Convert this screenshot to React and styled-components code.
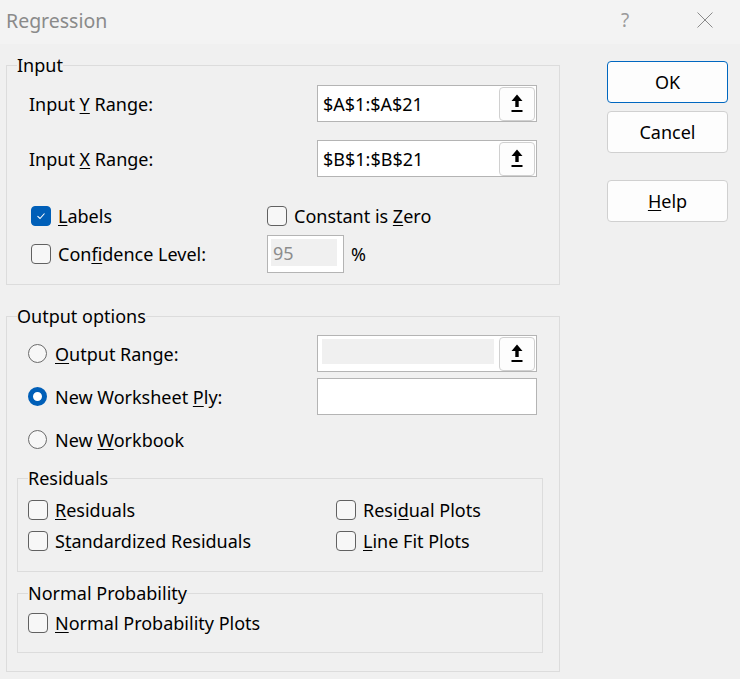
import React from 'react'
import styled, { createGlobalStyle } from 'styled-components'

const GlobalStyle = createGlobalStyle`
  html, body {
    margin: 0;
    padding: 0;
    background: #f0f0f0;
  }
  body {
    font-family: "Noto Sans", "Open Sans", sans-serif;
    font-size: 18px;
    color: #000;
  }
`

const Dialog = styled.div`
  width: 740px;
  height: 679px;
  background: #f0f0f0;
  overflow: hidden;
`

const TitleBar = styled.div`
  height: 44px;
  background: #f3f3f3;
  display: flex;
  align-items: center;
  padding-left: 6px;
  color: #8a8a8a;
  font-size: 19.5px;
`

const Title = styled.div`
  flex: 1;
  padding-bottom: 4px;
`

const TitleButton = styled.div`
  width: ${p => p.$w};
  display: flex;
  justify-content: center;
  padding-bottom: 4px;
  font-size: 19px;
  color: #9a9a9a;
`

const Body = styled.div`
  display: flex;
  padding: 10px 0 0 6px;
`

const LeftColumn = styled.div`
  width: 554px;
  display: flex;
  flex-direction: column;
  gap: 20px;
`

const RightColumn = styled.div`
  margin-left: 47px;
  padding-top: 7px;
  display: flex;
  flex-direction: column;
  gap: 8px;
`

const Group = styled.fieldset`
  margin: ${p => p.$m || '0'};
  border: 1px solid #dcdcdc;
  padding: 0;
  min-width: 0;
`

const Legend = styled.legend`
  padding: 0;
  margin-left: 10px;
  font-size: 18px;
  line-height: 22px;
`

const GroupBody = styled.div`
  padding: ${p => p.$pad};
`

const FieldRow = styled.div`
  display: flex;
  align-items: center;
  height: 37px;
  margin-bottom: ${p => p.$gap || '0'};
`

const RowLabel = styled.div`
  width: ${p => p.$w || '288px'};
  box-sizing: border-box;
  padding-left: ${p => p.$indent || '0'};
  flex-shrink: 0;
  display: flex;
  align-items: center;
`

const RangeBox = styled.div`
  width: 220px;
  height: 37px;
  box-sizing: border-box;
  border: 1px solid #b4b4b4;
  background: #fff;
  display: flex;
  align-items: center;
`

const RangeText = styled.div`
  flex: 1;
  padding-left: 5px;
`

const RangeFill = styled.div`
  flex: 1;
  align-self: stretch;
  margin: 3px 5px 7px 4px;
  background: #f0f0f0;
`

const PickButton = styled.div`
  width: 36px;
  height: 34px;
  box-sizing: border-box;
  border: 1px solid #d0d0d0;
  border-radius: 4px;
  background: #fdfdfd;
  display: flex;
  align-items: center;
  justify-content: center;
  margin-right: 1px;
`

const CheckGrid = styled.div`
  display: grid;
  grid-template-columns: ${p => p.$cols};
  row-gap: ${p => p.$rowGap || '11px'};
  align-items: center;
  padding-left: ${p => p.$indent || '0'};
`

const Option = styled.div`
  display: flex;
  align-items: center;
  height: 20px;
  white-space: nowrap;
`

const Box = styled.span`
  width: 20px;
  height: 20px;
  box-sizing: border-box;
  border-radius: 4px;
  border: 1px solid ${p => (p.$checked ? '#005fb8' : '#616161')};
  background: ${p => (p.$checked ? '#005fb8' : '#f7f7f7')};
  display: inline-flex;
  align-items: center;
  justify-content: center;
  margin-right: 7px;
  flex-shrink: 0;
`

const Radio = styled.span`
  width: 19px;
  height: 19px;
  box-sizing: border-box;
  border-radius: 50%;
  border: ${p => (p.$checked ? '5.5px solid #005fb8' : '1px solid #6b6b6b')};
  background: ${p => (p.$checked ? '#fff' : '#f7f7f7')};
  margin-right: 8px;
  flex-shrink: 0;
`

const Percent = styled.div`
  display: flex;
  align-items: center;
`

const SmallBox = styled.div`
  width: 77px;
  height: 38px;
  box-sizing: border-box;
  border: 1px solid #b4b4b4;
  background: #fff;
  padding: 3px 6px 6px 3px;
  margin-right: 7px;
  display: flex;
`

const SmallFill = styled.div`
  flex: 1;
  background: #f0f0f0;
  color: #8c8c8c;
  padding-left: 2px;
  display: flex;
  align-items: center;
`

const Button = styled.div`
  width: 121px;
  height: 42px;
  box-sizing: border-box;
  border: 1px solid ${p => (p.$primary ? '#0067c0' : '#d0d0d0')};
  border-radius: 4px;
  background: #fdfdfd;
  display: flex;
  align-items: center;
  justify-content: center;
  margin-top: ${p => (p.$spaced ? '19px' : '0')};
`

const U = styled.u`
  text-underline-offset: 2px;
`

const Arrow = () => (
  <svg width="12" height="19" viewBox="0 0 12 19">
    <path d="M6 0.5 L11.5 7 L7.7 7 L7.7 13 L4.3 13 L4.3 7 L0.5 7 Z" fill="#000" />
    <rect x="0.5" y="16" width="11" height="2" fill="#000" />
  </svg>
)

const Tick = () => (
  <svg width="12" height="12" viewBox="0 0 12 12">
    <path d="M2.5 6.2 L5 8.5 L9.5 3.5" fill="none" stroke="#fff" strokeWidth="1.1" />
  </svg>
)

const CloseIcon = () => (
  <svg width="16" height="16" viewBox="0 0 16 16">
    <path d="M0.5 0.5 L15.5 15.5 M15.5 0.5 L0.5 15.5" stroke="#8a8a8a" strokeWidth="1" fill="none" />
  </svg>
)

const Check = ({ checked, children }) => (
  <Option>
    <Box $checked={checked}>{checked && <Tick />}</Box>
    <span>{children}</span>
  </Option>
)

const RadioOpt = ({ checked, children }) => (
  <Option>
    <Radio $checked={checked} />
    <span>{children}</span>
  </Option>
)

export default function App() {
  return (
    <Dialog>
      <GlobalStyle />
      <TitleBar>
        <Title>Regression</Title>
        <TitleButton $w="90px">?</TitleButton>
        <TitleButton $w="70px"><CloseIcon /></TitleButton>
      </TitleBar>
      <Body>
        <LeftColumn>
          <Group>
            <Legend>Input</Legend>
            <GroupBody $pad="9px 22px 11px 22px">
              <FieldRow $gap="18px">
                <RowLabel><span>Input <U>Y</U> Range:</span></RowLabel>
                <RangeBox>
                  <RangeText>$A$1:$A$21</RangeText>
                  <PickButton><Arrow /></PickButton>
                </RangeBox>
              </FieldRow>
              <FieldRow $gap="29px">
                <RowLabel><span>Input <U>X</U> Range:</span></RowLabel>
                <RangeBox>
                  <RangeText>$B$1:$B$21</RangeText>
                  <PickButton><Arrow /></PickButton>
                </RangeBox>
              </FieldRow>
              <CheckGrid $cols="236px 1fr" $rowGap="9px" $indent="2px">
                <Check checked><U>L</U>abels</Check>
                <Check>Constant is <U>Z</U>ero</Check>
                <Check>Con<U>f</U>idence Level:</Check>
                <Percent>
                  <SmallBox><SmallFill>95</SmallFill></SmallBox>
                  %
                </Percent>
              </CheckGrid>
            </GroupBody>
          </Group>

          <Group>
            <Legend>Output options</Legend>
            <GroupBody $pad="8px 16px 18px 10px">
              <FieldRow $gap="6px">
                <RowLabel $w="300px" $indent="11px">
                  <RadioOpt><U>O</U>utput Range:</RadioOpt>
                </RowLabel>
                <RangeBox>
                  <RangeFill />
                  <PickButton><Arrow /></PickButton>
                </RangeBox>
              </FieldRow>
              <FieldRow $gap="6px">
                <RowLabel $w="300px" $indent="11px">
                  <RadioOpt checked>New Worksheet <U>P</U>ly:</RadioOpt>
                </RowLabel>
                <RangeBox />
              </FieldRow>
              <FieldRow $gap="9px">
                <RowLabel $w="300px" $indent="11px">
                  <RadioOpt>New <U>W</U>orkbook</RadioOpt>
                </RowLabel>
              </FieldRow>

              <Group>
                <Legend>Residuals</Legend>
                <GroupBody $pad="11px 10px 20px">
                  <CheckGrid $cols="308px 1fr" $rowGap="11px">
                    <Check><U>R</U>esiduals</Check>
                    <Check>Resi<U>d</U>ual Plots</Check>
                    <Check>S<U>t</U>andardized Residuals</Check>
                    <Check><U>L</U>ine Fit Plots</Check>
                  </CheckGrid>
                </GroupBody>
              </Group>

              <Group $m="10px 0 0">
                <Legend>Normal Probability</Legend>
                <GroupBody $pad="9px 10px 19px">
                  <Check><U>N</U>ormal Probability Plots</Check>
                </GroupBody>
              </Group>
            </GroupBody>
          </Group>
        </LeftColumn>

        <RightColumn>
          <Button $primary>OK</Button>
          <Button>Cancel</Button>
          <Button $spaced><U>H</U>elp</Button>
        </RightColumn>
      </Body>
    </Dialog>
  )
}
